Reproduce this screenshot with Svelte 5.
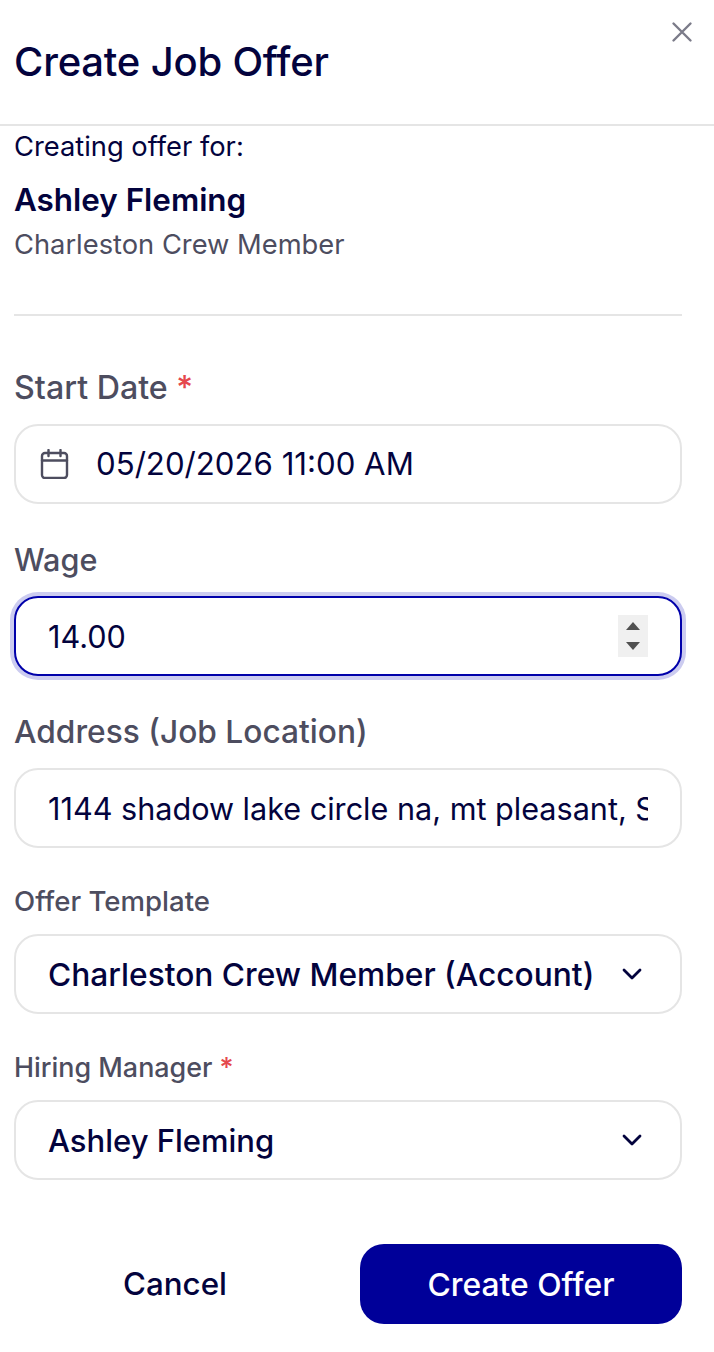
<script>
	let startDate = $state('05/20/2026 11:00 AM');
	let wage = $state('14.00');
	let address = $state('1144 shadow lake circle na, mt pleasant, SC 29464');
</script>

<div class="modal">
	<header class="header">
		<h1>Create Job Offer</h1>
		<button class="close" aria-label="Close">
			<svg width="24" height="24" viewBox="0 0 24 24" fill="none" stroke="currentColor" stroke-width="2.4" stroke-linecap="round">
				<path d="M3.5 3.5l17 17M20.500 3.500l-17 17" />
			</svg>
		</button>
	</header>

	<div class="body">
		<section class="candidate">
			<p class="for">Creating offer for:</p>
			<p class="name">Ashley Fleming</p>
			<p class="role">Charleston Crew Member</p>
		</section>

		<div class="field first">
			<span class="label start">Start Date <em>*</em></span>
			<div class="control">
				<svg class="cal" width="30" height="30" viewBox="0 0 30 30" fill="none" stroke="currentColor" stroke-width="2.400" stroke-linecap="round" stroke-linejoin="round">
					<rect x="2" y="4" width="25" height="25" rx="3" />
					<path d="M2 11.500h25M8.500 1v6M20.500 1v6" />
				</svg>
				<input class="date" bind:value={startDate} />
			</div>
		</div>

		<div class="field">
			<span class="label wage">Wage</span>
			<div class="control focused">
				<input class="tight" bind:value={wage} />
				<div class="spin">
					<i class="up"></i>
					<i class="down"></i>
				</div>
			</div>
		</div>

		<div class="field">
			<span class="label">Address (Job Location)</span>
			<div class="control">
				<input class="tight" bind:value={address} />
			</div>
		</div>

		<div class="field small">
			<span class="label">Offer Template</span>
			<div class="control select">
				<span class="template">Charleston Crew Member (Account)</span>
				<svg width="20" height="12" viewBox="0 0 20 12" fill="none" stroke="currentColor" stroke-width="2.800" stroke-linecap="round" stroke-linejoin="round"><path d="M2 2l8 8 8-8" /></svg>
			</div>
		</div>

		<div class="field small">
			<span class="label manager">Hiring Manager <em>*</em></span>
			<div class="control select">
				<span class="person">Ashley Fleming</span>
				<svg width="20" height="12" viewBox="0 0 20 12" fill="none" stroke="currentColor" stroke-width="2.800" stroke-linecap="round" stroke-linejoin="round"><path d="M2 2l8 8 8-8" /></svg>
			</div>
		</div>

		<footer class="actions">
			<button class="cancel">Cancel</button>
			<button class="submit">Create Offer</button>
		</footer>
	</div>
</div>

<style>
	:global(body) {
		margin: 0;
		background: #fff;
	}

	.modal {
		--ink: #03033d;
		--muted: #4d4d5f;
		--line: #e5e5e5;
		width: 714px;
		height: 1352px;
		overflow: hidden;
		font-family: Inter, "Open Sans", sans-serif;
		color: var(--ink);
		position: relative;
	}

	.header {
		box-sizing: content-box;
		height: 86px;
		padding: 38px 14px 0;
		border-bottom: 2px solid var(--line);
	}

	h1 {
		margin: 0;
		font-size: 40px;
		line-height: 48px;
		font-weight: 500;
		letter-spacing: -0.2px;
	}

	.close {
		position: absolute;
		top: 20px;
		right: 20px;
		padding: 0;
		border: 0;
		background: none;
		color: #7b7b89;
		display: flex;
	}

	.body {
		padding: 0 32px 0 14px;
	}

	.candidate {
		border-bottom: 2px solid var(--line);
		height: 188px;
	}

	.candidate p {
		margin: 0;
	}

	.for {
		font-size: 27.300px;
		line-height: 42px;
	}

	.candidate .name {
		font-size: 31.400px;
		line-height: 40px;
		font-weight: 600;
		margin-top: 12px;
	}

	.candidate .role {
		font-size: 27.300px;
		line-height: 36px;
		color: var(--muted);
		margin-top: 7px;
	}

	.field {
		margin-top: 36px;
	}

	.field.first {
		margin-top: 52px;
	}

	.field.small {
		margin-top: 35px;
	}

	.label {
		display: block;
		font-size: 31.700px;
		line-height: 40px;
		font-weight: 500;
		color: var(--muted);
		margin-bottom: 16px;
	}

	.label.start {
		font-size: 32.200px;
	}

	.label.wage {
		font-size: 30.600px;
	}

	.small .label {
		font-size: 27.600px;
		line-height: 36px;
		margin-bottom: 15px;
	}

	.small .label.manager {
		font-size: 26.900px;
	}

	.label em {
		font-style: normal;
		color: #e5484d;
	}

	.control {
		height: 80px;
		box-sizing: border-box;
		border: 2px solid var(--line);
		border-radius: 24px;
		padding: 0 32px;
		display: flex;
		align-items: center;
		background: #fff;
	}

	.control.focused {
		border-color: #0000aa;
		box-shadow: 0 0 0 4px #ccccf0;
	}

	.control input {
		flex: 1;
		min-width: 0;
		border: 0;
		outline: 0;
		padding: 0;
		background: none;
		font: inherit;
		font-size: 31.200px;
		color: var(--ink);
	}

	.control input.tight {
		font-size: 30.600px;
	}

	.cal {
		color: var(--muted);
		margin-left: -8px;
		margin-right: 26px;
		flex: none;
	}

	.spin {
		width: 30px;
		height: 42px;
		background: #f0f0f0;
		display: flex;
		flex-direction: column;
		align-items: center;
		justify-content: center;
		gap: 12px;
		flex: none;
	}

	.spin i {
		width: 0;
		height: 0;
		border-left: 7px solid transparent;
		border-right: 7px solid transparent;
	}

	.spin .up {
		border-bottom: 8px solid #505050;
	}

	.spin .down {
		border-top: 8px solid #505050;
	}

	.select {
		justify-content: space-between;
		font-weight: 500;
	}

	.template {
		font-size: 31.700px;
	}

	.person {
		font-size: 31px;
	}

	.select svg {
		margin-right: 6px;
		flex: none;
	}

	.actions {
		display: flex;
		margin-top: 64px;
		justify-content: space-between;
	}

	.actions button {
		height: 80px;
		border: 0;
		border-radius: 24px;
		font: inherit;
		font-size: 31.300px;
		font-weight: 500;
	}

	.cancel {
		width: 322px;
		background: none;
		color: var(--ink);
	}

	.actions .submit {
		width: 322px;
		background: #000099;
		color: #fff;
		font-size: 31.800px;
	}
</style>
